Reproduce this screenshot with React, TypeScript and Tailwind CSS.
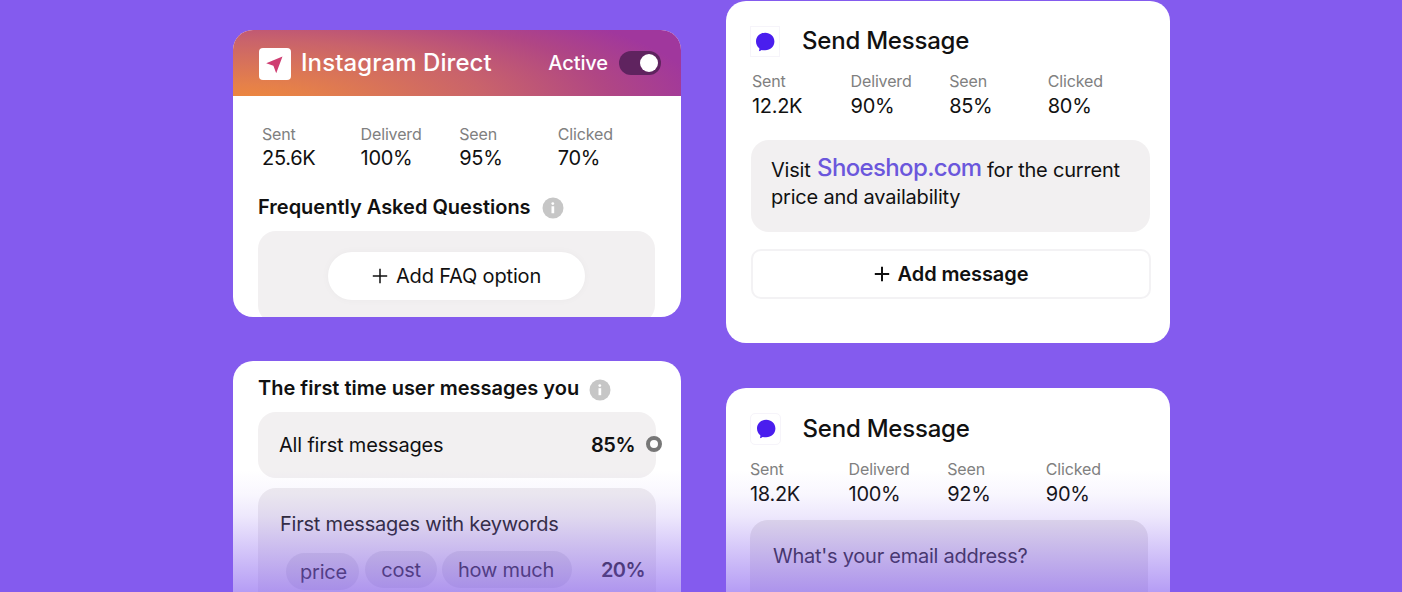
import type { ReactNode } from "react";

type Stat = { label: string; value: string };

const toStats = (sent: string, delivered: string, seen: string, clicked: string): Stat[] => [
  { label: "Sent", value: sent },
  { label: "Deliverd", value: delivered },
  { label: "Seen", value: seen },
  { label: "Clicked", value: clicked },
];

function Stats({ items, className }: { items: Stat[]; className: string }) {
  return (
    <dl className={`grid grid-cols-[repeat(4,98.6px)] ${className}`}>
      {items.map((s) => (
        <div key={s.label}>
          <dt className="text-[16px] leading-6 tracking-[-0.15px] text-[#808080]">{s.label}</dt>
          <dd className="text-[20px] tracking-[-0.3px] text-[#111]">{s.value}</dd>
        </div>
      ))}
    </dl>
  );
}

function InfoIcon({ className }: { className: string }) {
  return (
    <svg viewBox="0 0 22 22" className={`h-[22px] w-[22px] shrink-0 ${className}`}>
      <circle cx="11" cy="11" r="10.5" fill="#c6c6c6" />
      <circle cx="10.8" cy="6.6" r="1.4" fill="#fff" />
      <path d="M9.500 9.200h2.700v7H9.500z" fill="#fff" />
    </svg>
  );
}

function PlusIcon({ width }: { width: number }) {
  return (
    <svg viewBox="0 0 16 16" className="h-4 w-4 shrink-0" fill="none" stroke="#111" strokeWidth={width}>
      <path d="M8 .8v14.4M.8 8h14.4" />
    </svg>
  );
}

function ChatBadge({ className }: { className: string }) {
  return (
    <span className={`flex items-center justify-center border border-[#f6f4fa] bg-white ${className}`}>
      <svg viewBox="0 0 20 20" className="h-5 w-5" fill="#4a1eee">
        <path d="M10.200 .8C15.400 .8 19.400 4.600 19.400 9.500S15.400 18.300 10.200 18.300C8.900 18.300 7.700 18.100 6.600 17.900C5.900 18.300 5 18.800 3.900 19.300C4.300 18.300 4.400 17.300 4.300 16.300C2.200 14.700 1 12.300 1 9.500C1 4.600 5 .8 10.200 .8Z" />
      </svg>
    </span>
  );
}

function Keyword({ children, className }: { children: ReactNode; className: string }) {
  return (
    <span className={`flex h-[37px] items-center justify-center rounded-full bg-[#dbd9df] text-[20px] tracking-[-0.25px] ${className}`}>
      {children}
    </span>
  );
}

export default function App() {
  return (
    <main className="relative flex h-[592px] w-[1402px] gap-[45px] overflow-hidden bg-[#845bee] pl-[233px] font-['Inter',sans-serif] text-[#111]">
      <div className="flex w-[448px] shrink-0 flex-col gap-11 pt-[30px]">
        <section className="h-[287px] shrink-0 overflow-hidden rounded-[20px] bg-white">
          <header className="flex h-[66px] items-center bg-[radial-gradient(520px_132px_at_3%_108%,#ee883c_0%,#e5804a_13%,#c9636b_46%,#b04684_70%,#a0379d_88%)] pl-[26px] pr-5 text-white">
            <span className="mt-[2px] flex h-8 w-8 items-center justify-center rounded-[4px] bg-white">
              <svg viewBox="0 0 32 32" className="h-8 w-8">
                <path d="M23.500 8.500L7.200 15.200L14.400 17.800L17.200 25.200Z" fill="#cf3e72" />
              </svg>
            </span>
            <h2 className="ml-[10px] text-[24px] font-medium tracking-[0.08px]">Instagram Direct</h2>
            <span className="ml-auto text-[20px] font-medium tracking-[-0.1px]">Active</span>
            <span className="ml-[11px] flex h-6 w-[42px] items-center justify-end rounded-full bg-[#5f235f] pr-[3px]">
              <span className="h-[18px] w-[18px] rounded-full bg-white" />
            </span>
          </header>
          <Stats items={toStats("25.6K", "100%", "95%", "70%")} className="pl-[29px] pt-[26px] leading-[24px]" />
          <div className="flex items-center pl-[25px] pt-[25px]">
            <h3 className="text-[20px] font-semibold leading-[25px]">Frequently Asked Questions</h3>
            <InfoIcon className="ml-[11px]" />
          </div>
          <div className="ml-[25px] mt-[11px] flex h-[92px] w-[397px] justify-center rounded-[18px] bg-[#f2f0f1] pt-[21px]">
            <button className="flex h-12 w-[257px] items-center justify-center gap-2 rounded-full bg-white text-[20px] tracking-[-0.16px] shadow-[0_0_8px_rgba(0,0,0,0.03)]">
              <PlusIcon width={1.5} />
              Add FAQ option
            </button>
          </div>
        </section>

        <section className="h-[260px] shrink-0 rounded-[20px] bg-white pl-[25px] pt-[14px]">
          <div className="flex items-center">
            <h3 className="text-[20px] font-semibold leading-[26px]">The first time user messages you</h3>
            <InfoIcon className="ml-[10px] mt-[3px]" />
          </div>
          <div className="mt-[11px] flex h-[66px] w-[404px] items-center">
            <div className="flex h-full w-[398px] shrink-0 items-center justify-between rounded-[18px] bg-[#f2f0f1] pl-[21px] pr-[21px] text-[20px]">
              <span className="tracking-[-0.18px]">All first messages</span>
              <span className="font-semibold tracking-[-0.5px]">85%</span>
            </div>
            <span className="-ml-[10px] -mt-[3px] h-4 w-4 shrink-0 rounded-full border-4 border-[#777] bg-white" />
          </div>
          <div className="mt-[10px] h-[130px] w-[398px] rounded-[18px] bg-[#efedef] pl-[22px] pt-[23px] text-[20px] text-[#222]">
            <p className="leading-[26px] tracking-[-0.22px]">First messages with keywords</p>
            <div className="ml-[6px] mt-[14px] flex">
              <Keyword className="mt-[2px] w-[73px] pl-[2px]">price</Keyword>
              <Keyword className="ml-[6px] w-[72px]">cost</Keyword>
              <Keyword className="ml-[5px] w-[130px] pr-[2px]">how much</Keyword>
              <span className="ml-[29px] font-semibold leading-[39px] tracking-[-0.6px]">20%</span>
            </div>
          </div>
        </section>
      </div>

      <div className="flex w-[444px] shrink-0 flex-col gap-[45px] pt-px">
        <section className="h-[342px] shrink-0 rounded-[20px] bg-white pl-[25px] pt-[25px]">
          <div className="flex items-center">
            <ChatBadge className="-ml-px h-[31px] w-[30px]" />
            <h2 className="-mt-px ml-[22px] text-[24px] font-medium leading-[30px] tracking-[-0.22px]">Send Message</h2>
          </div>
          <Stats items={toStats("12.2K", "90%", "85%", "80%")} className="pl-px pt-[12px] leading-[26px]" />
          <div className="mt-[21px] h-[92px] w-[399px] rounded-[18px] bg-[#f2f0f1] pl-5 pt-[15px] text-[20px] leading-[27px] tracking-[-0.2px]">
            <p className="whitespace-nowrap">
              Visit{" "}
              <span className="relative -top-px ml-px text-[24px] font-medium tracking-[-0.64px] text-[#6b57dc]">
                Shoeshop.com
              </span>{" "}
              for the current
            </p>
            <p>price and availability</p>
          </div>
          <button className="mt-[17px] flex h-[50px] w-[400px] items-center justify-center gap-2 rounded-[10px] border-2 border-[#f3f2f4] text-[20px] font-semibold tracking-[-0.1px]">
            <PlusIcon width={2} />
            Add message
          </button>
        </section>

        <section className="h-[240px] shrink-0 rounded-[20px] bg-white pl-[24px] pt-[25px]">
          <div className="flex items-center">
            <ChatBadge className="h-[32px] w-[31px] rounded-[5px]" />
            <h2 className="ml-[21.5px] text-[24px] font-medium leading-[30px] tracking-[-0.22px]">Send Message</h2>
          </div>
          <Stats items={toStats("18.2K", "100%", "92%", "90%")} className="pt-[12px] leading-[26px]" />
          <div className="mt-[13px] h-[110px] w-[398px] rounded-[18px] bg-[#eae8e9] pl-[23px] pt-[23px] text-[20px] leading-[26px] tracking-[-0.25px] text-[#222]">
            What's your email address?
          </div>
        </section>
      </div>

      <div className="pointer-events-none absolute inset-x-0 bottom-0 h-[122px] bg-[linear-gradient(to_bottom,rgba(132,91,238,0)_0%,rgba(132,91,238,0.05)_20%,rgba(132,91,238,0.14)_38%,rgba(132,91,238,0.32)_62%,rgba(132,91,238,0.6)_100%)]" />
    </main>
  );
}
